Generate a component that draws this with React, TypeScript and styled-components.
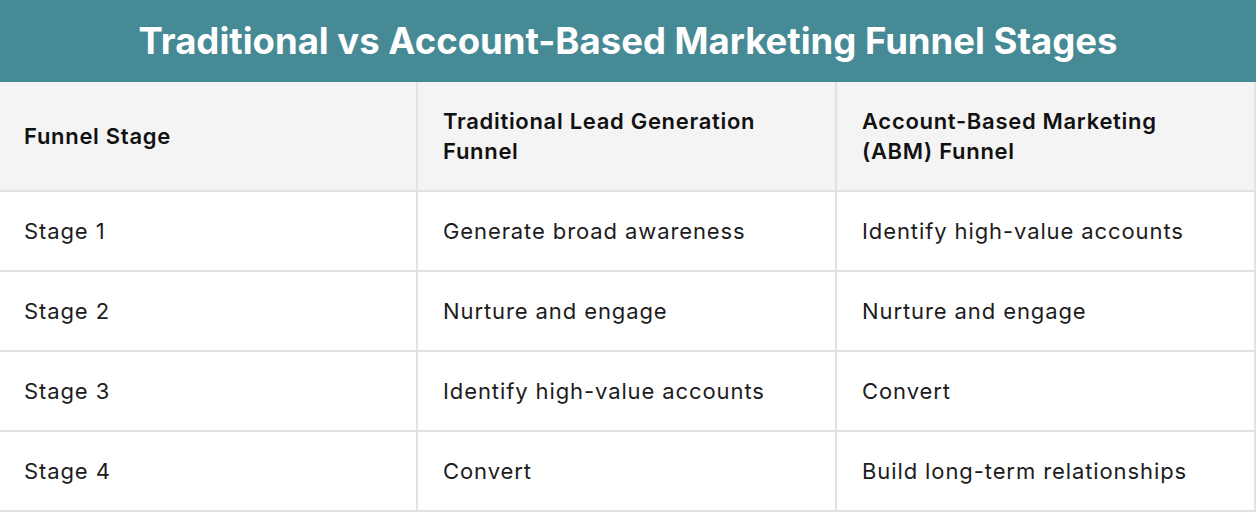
import React from 'react';
import styled, { createGlobalStyle } from 'styled-components';

const GlobalStyle = createGlobalStyle`
  html, body {
    margin: 0;
    padding: 0;
    background: #ffffff;
  }
  body {
    font-family: Inter, 'Noto Sans', sans-serif;
  }
`;

const rows = [
  { stage: 'Stage 1', traditional: 'Generate broad awareness', abm: 'Identify high-value accounts' },
  { stage: 'Stage 2', traditional: 'Nurture and engage', abm: 'Nurture and engage' },
  { stage: 'Stage 3', traditional: 'Identify high-value accounts', abm: 'Convert' },
  { stage: 'Stage 4', traditional: 'Convert', abm: 'Build long-term relationships' },
];

const FunnelTable: React.FC = () => {
  return (
    <Wrapper>
      <Title>Traditional vs Account-Based Marketing Funnel Stages</Title>
      <Grid>
        <Cell $head>Funnel Stage</Cell>
        <Cell $head>Traditional Lead Generation Funnel</Cell>
        <Cell $head>Account-Based Marketing (ABM) Funnel</Cell>
        {rows.map((row) => (
          <React.Fragment key={row.stage}>
            <Cell>{row.stage}</Cell>
            <Cell>{row.traditional}</Cell>
            <Cell>{row.abm}</Cell>
          </React.Fragment>
        ))}
      </Grid>
    </Wrapper>
  );
};

const App: React.FC = () => (
  <>
    <GlobalStyle />
    <FunnelTable />
  </>
);

const Wrapper = styled.div`
  width: 1256px;
`;

const Title = styled.div`
  height: 82px;
  background: #468a95;
  color: #ffffff;
  display: flex;
  align-items: center;
  justify-content: center;
  font-family: Inter, 'Noto Sans', sans-serif;
  font-weight: 700;
  font-size: 36.5px;
`;

const Grid = styled.div`
  display: grid;
  grid-template-columns: 418px 419px 419px;
  grid-auto-rows: 80px;
  grid-template-rows: 110px;
`;

const Cell = styled.div<{ $head?: boolean }>`
  display: flex;
  align-items: center;
  box-sizing: border-box;
  padding: 0 40px 0 24px;
  border-bottom: 2px solid #e2e2e2;
  border-right: 2px solid #e2e2e2;
  background: ${(p) => (p.$head ? '#f4f4f4' : '#ffffff')};
  color: ${(p) => (p.$head ? '#111111' : '#1c1c1c')};
  font-weight: ${(p) => (p.$head ? 600 : 400)};
  font-size: 22px;
  letter-spacing: ${(p) => (p.$head ? '0.7px' : '0.9px')};
  line-height: 30px;

  &:nth-child(3n + 2),
  &:nth-child(3n) {
    padding-left: 25px;
  }
`;

export default App;
